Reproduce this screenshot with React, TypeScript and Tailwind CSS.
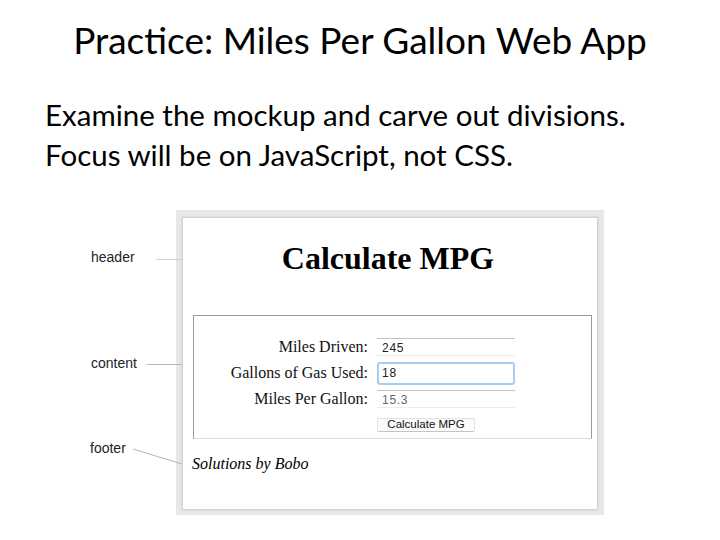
export default function App() {
  return (
    <div className="w-[720px] h-[540px] bg-white overflow-hidden pt-[18px] text-black font-['Lato','Open_Sans',sans-serif]">
      <h1 className="text-center text-[37px] leading-[44px]">Practice: Miles Per Gallon Web App</h1>
      <div className="mt-[33px] pl-[45px] text-[29.5px] leading-[40px]">
        <p>Examine the mockup and carve out divisions.</p>
        <p>Focus will be on JavaScript, not CSS.</p>
      </div>

      <div className="relative mt-[35px] h-[305px]">
        <MockupFrame />
        <Annotations />
      </div>
    </div>
  );
}

function MockupFrame() {
  return (
    <div className="ml-[176px] w-[428px] h-[305px] bg-[#e8e8e8] pt-[8px] pl-[7px] pr-[7px] pb-[6px]">
      <div className="h-full bg-white shadow-[0_0_2px_1px_rgba(0,0,0,0.14)] pt-[22px] font-['Liberation_Serif','Times_New_Roman',serif]">
        <h2 className="text-center pr-[4px] text-[32px] leading-[36px] font-bold">Calculate MPG</h2>

        <div className="mt-[39px] ml-[10px] w-[399px] border border-[#9a9a9a] border-b-[#dcdcdc] pt-[18px]">
          <div className="grid grid-cols-[174px_138px] gap-x-[9px]">
            <Label>Miles Driven:</Label>
            <div className="h-[26px] flex items-center">
              <Field value="245" />
            </div>
            <Label>Gallons of Gas Used:</Label>
            <div className="h-[26px] flex items-center">
              <div className="w-full h-[23px] rounded-[3px] border-[2px] border-[#a9ccf0] bg-white flex items-center pl-[3px] text-[12px] tracking-[0.06em] text-[#222] font-['Liberation_Sans',Arial,sans-serif]">
                18
              </div>
            </div>
            <Label>Miles Per Gallon:</Label>
            <div className="h-[26px] flex items-center">
              <Field value="15.3" muted />
            </div>
            <div />
            <div className="h-[26px] flex items-center">
              <button className="w-[98px] h-[14px] rounded-[2px] border border-[#e2e2e2] border-b-[#c4c4c4] bg-[#fbfbfb] flex items-center justify-center text-[11.5px] leading-none text-[#111] font-['Liberation_Sans',Arial,sans-serif]">
                Calculate MPG
              </button>
            </div>
          </div>
        </div>

        <p className="mt-[15px] pl-[9px] italic text-[16px] leading-[20px]">Solutions by Bobo</p>
      </div>
    </div>
  );
}

function Label({ children }: { children: string }) {
  return <div className="h-[26px] flex items-center justify-end text-[16px] text-[#111]">{children}</div>;
}

function Field({ value, muted }: { value: string; muted?: boolean }) {
  return (
    <div
      className={
        "w-full h-[18px] border-t border-t-[#c2c2c2] border-b border-b-[#ececec] flex items-center pl-[5px] pt-[2px] text-[12px] tracking-[0.06em] font-['Liberation_Sans',Arial,sans-serif] " +
        (muted ? "text-[#666]" : "text-[#222]")
      }
    >
      {value}
    </div>
  );
}

function Annotations() {
  return (
    <>
      <svg className="absolute left-0 top-0 pointer-events-none" width="720" height="305">
        <line x1="156" y1="49.5" x2="182" y2="49.5" stroke="#cfcfcf" strokeWidth="1" />
        <line x1="147" y1="154.5" x2="182" y2="154.5" stroke="#b5b5b5" strokeWidth="1" />
        <line x1="133" y1="239" x2="182" y2="254" stroke="#b5b5b5" strokeWidth="1" />
      </svg>
      <span className="absolute left-[91px] top-[39px] text-[14px] leading-[16px] text-[#222] font-['Liberation_Sans',Arial,sans-serif]">header</span>
      <span className="absolute left-[91px] top-[145px] text-[14px] leading-[16px] text-[#222] font-['Liberation_Sans',Arial,sans-serif]">content</span>
      <span className="absolute left-[90px] top-[230px] text-[14px] leading-[16px] text-[#222] font-['Liberation_Sans',Arial,sans-serif]">footer</span>
    </>
  );
}
